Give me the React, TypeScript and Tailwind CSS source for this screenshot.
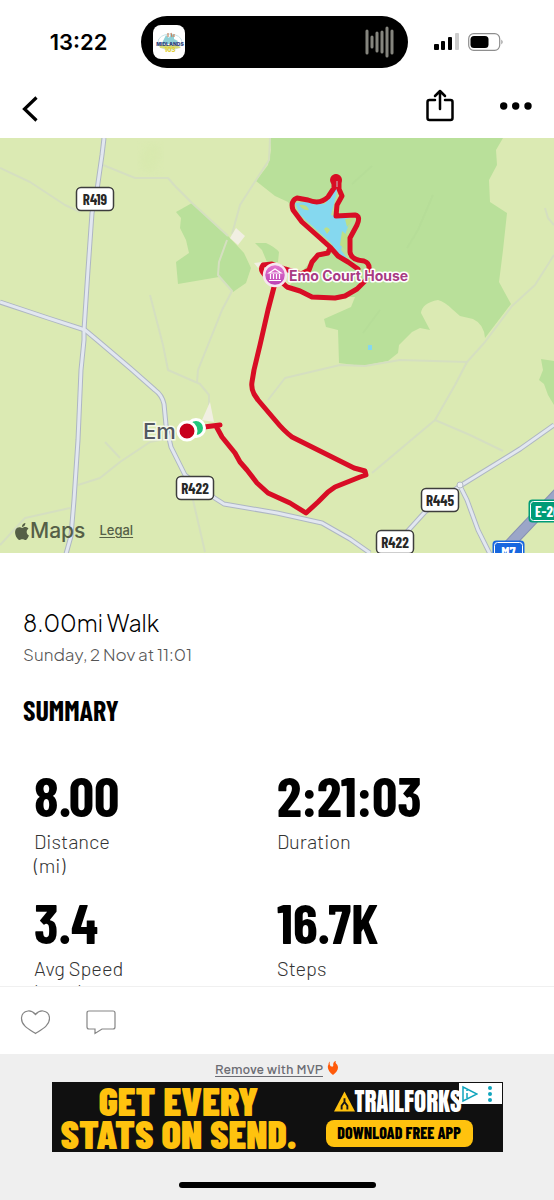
import React from 'react';

const condensed = "font-['Barlow_Condensed','Roboto_Condensed','Liberation_Sans_Narrow',sans-serif]";
const jakarta = "font-['Plus_Jakarta_Sans','DM_Sans','Inter',sans-serif]";
const barlow = "font-['Barlow','Roboto',sans-serif]";

const stats = [
  { value: '8.00', label: 'Distance (mi)' },
  { value: '2:21:03', label: 'Duration' },
  { value: '3.4', label: 'Avg Speed (mph)' },
  { value: '16.7K', label: 'Steps' },
];

function StatusBar() {
  return (
    <div className="grid grid-cols-[141fr_267fr_146fr] items-center pt-4">
      <div className="pl-4 text-center font-['Inter',sans-serif] text-[22px] font-semibold leading-none">13:22</div>
      <div className="flex h-[52px] items-center justify-between rounded-full bg-black px-3">
        <svg className="h-[34px] w-8" viewBox="0 0 32 34" role="img" aria-label="Midlands 103">
          <rect width="32" height="34" rx="8" fill="#fff" />
          <ellipse cx="17" cy="17" rx="12" ry="8" fill="none" stroke="#c8e4e8" />
          <path d="M10 16l3-6 3 3 2-4 3 1v4l4 2-2 3H9z" fill="#8fd0d6" />
          <path d="M15 8v4M18 8l1 4M21 9v3" stroke="#c68562" strokeWidth="1.2" />
          <path d="M6 20h18l4 3-9 1-12-1z" fill="#d6dc78" />
          <text x="17" y="21" textAnchor="middle" fontFamily="Inter, sans-serif" fontWeight="900" fontSize="5" fill="#33477f">MIDLANDS</text>
          <text x="17" y="27" textAnchor="middle" fontFamily="Inter, sans-serif" fontWeight="900" fontSize="6" fill="#dfcf38">103</text>
        </svg>
        <svg className="h-8 w-8" viewBox="0 0 32 32" stroke="#85857e" strokeWidth="3" strokeLinecap="round" aria-hidden="true">
          <path d="M3 5v22M8 11v10M13 7v18M18 6v20M23 2v28M28 5v22" />
        </svg>
      </div>
      <div className="flex items-center gap-2 pl-[26px]">
        <svg className="h-[18px] w-[26px]" viewBox="0 0 26 18" aria-hidden="true">
          <rect x="0" y="11" width="5" height="6" rx="1" />
          <rect x="7" y="8" width="4" height="9" rx="1" />
          <rect x="14" y="4" width="4" height="13" rx="1" />
          <rect x="21" y="0" width="4" height="17" rx="1" fill="#ccc" />
        </svg>
        <svg className="h-[18px] w-9" viewBox="0 0 36 18" aria-hidden="true">
          <rect x=".7" y=".7" width="31" height="16.600" rx="5" fill="none" stroke="#8e8e8e" strokeWidth="1.200" />
          <rect x="2.500" y="3" width="18" height="12" rx="3.500" />
          <path d="M33.500 6.500q2 2.500 0 5z" fill="#777" />
        </svg>
      </div>
    </div>
  );
}

function Toolbar() {
  return (
    <header className="flex h-[70px] items-center justify-between pr-[22px] pl-5">
      <button aria-label="Back" className="pt-3">
        <svg className="h-7 w-5" viewBox="0 0 20 28" fill="none" stroke="#000" strokeWidth="3.200" aria-hidden="true">
          <path d="M16.500 2.500L4.500 14l12 11.500" />
        </svg>
      </button>
      <div className="flex items-center gap-11 pt-1">
        <button aria-label="Share">
          <svg className="h-9 w-8" viewBox="0 0 32 36" fill="none" stroke="#000" strokeWidth="2.500" strokeLinecap="round" strokeLinejoin="round" aria-hidden="true">
            <path d="M11 13H5.500Q3.500 13 3.500 15v16q0 2 2 2h21q2 0 2-2V15q0-2-2-2H21M16 22V4M11 9l5-5 5 5" />
          </svg>
        </button>
        <button aria-label="More">
          <svg className="h-8 w-8" viewBox="0 0 32 32" aria-hidden="true">
            <circle cx="3.700" cy="17" r="3.700" /><circle cx="15.700" cy="17" r="3.700" /><circle cx="28" cy="17" r="3.700" />
          </svg>
        </button>
      </div>
    </header>
  );
}

const roads = [
  'M104 138L102 155 97 190 92 213 88 270 84 330V340L81 370 78 440 74 500 71 536 66 554',
  'M0 302L48 318 85 330 97 340 130 368 155 390Q162 395 164 404L166 425 171 447 185 475 213 497 224 504 277 513 322 523 350 539 370 553',
  'M405 534L425 512 460 486 520 449 554 425',
  'M460 486L467 500 478 530 490 554',
];

const paths = [
  'M0 168L30 182 65 205 80 212', 'M103 165L135 178H168L175 186 192 203 228 236',
  'M270 138L269 160 256 180 240 205 232 234', 'M227 240L219 262 218 275 232 291 222 310 212 335 198 370 197 382',
  'M150 295L163 345 168 370 200 384 209 395V405', 'M78 485L100 478 120 462 150 442 170 438', 'M105 442L120 458',
  'M0 545L25 518 70 508', 'M193 500L205 552', 'M268 400L285 378 340 365 365 366 400 360 467 362 485 342 512 306 535 285 554 255',
  'M467 362L455 385 435 420 410 441 372 473', 'M435 420L470 435 503 451', 'M545 208L548 218 554 225',
];

const track = [
  'M358 269L348 262 338 256 330 247 320 238 302 222 293 210Q290 201 297 198L308 200Q320 205 328 197L334 188V178Q337 175 339 180L339 189 342 196 337 205 336 216 355 215Q361 216 357 225L350 238V252Q351 260 364 261 370 263 369 270L366 280 357 289 345 296 335 298 312 297 300 291 287 287 275 276',
  'M329 250L328 253 318 255 312 262 309 270 301 274 285 269 272 264 263 265Q259 270 266 276',
  'M274 287L268 310 260 345 254 370 252 382Q251 388 254 394L258 400 275 420Q284 431 292 437L320 451 354 468 365 471 366 475 360 477 335 487 328 492 318 502 306 513 290 503 268 493 257 483 247 470 240 462 235 453 222 437 216 426M204 427L220 425',
];

function Shield({ x, y, text }: { x: number; y: number; text: string }) {
  return (
    <g>
      <rect x={x - 18.500} y={y - 11.500} width="37" height="23" rx="4.500" fill="#fff" stroke="#3d3d3d" strokeWidth="1.500" />
      <text x={x} y={y + 5.500} textAnchor="middle" fontSize="15" fontWeight="700" fill="#272727" className={condensed}>{text}</text>
    </g>
  );
}

function RouteMap() {
  return (
    <section aria-label="Route map" className="relative">
      <svg className="block w-full" viewBox="0 138 554 415">
        <defs>
          <linearGradient id="pin" x1="0" y1="0" x2="0" y2="1"><stop stopColor="#e77bd0" /><stop offset="1" stopColor="#b83eb3" /></linearGradient>
          <filter id="soft"><feGaussianBlur stdDeviation="4" /></filter>
        </defs>
        <rect y="138" width="554" height="415" fill="#dbeab3" />
        <path d="M147 145Q165 142 160 158T147 173Q132 166 147 145" fill="#d5e8aa" filter="url(#soft)" opacity=".5" />
        <g fill="#b9e09a">
          <path d="M270 138L271 150 268 165 256 181 275 196 288 202 302 222 330 247 312 260 290 285 315 297H355L351 307 324 319 326 327 338 330 339 363 362 366 388 361 398 353 399 345 412 332 420 328 430 330 421 313Q422 303 438 300 445 302 452 309L460 316 473 319Q484 324 485 338L511 304 499 282 503 250 507 213 490 202 489 180 497 165 496 150 503 138Z" />
          <path d="M176 212L192 203 228 236 244 253 251 268 246 283 233 292 219 277 178 284 176 262 189 253 186 240 180 228 181 218Z" />
          <path d="M255 243H266Q275 247 279 252L278 262 267 262 262 250ZM541 359L554 361V405L548 395 544 384 539 380 543 370Z" />
        </g>
        <path d="M433 195L418 230 407 248M372 166L352 184M380 310L363 333" fill="none" stroke="#afd896" strokeWidth="2" opacity=".3" />
        <g fill="none" stroke="#d5dfc0" strokeWidth="2" strokeLinejoin="round">
          {paths.map((d) => <path key={d} d={d} />)}
        </g>
        <path d="M236 228L245 236 238 245 230 238ZM254 263l8-1-4 6zM210 402L214 422 202 420Z" fill="#f1efe2" />
        <path d="M337 180L337 191 335 200 331 215 340 217 351 219 346 232 341 250 350 262 358 269 345 262 330 242 300 215 295 203 305 202 325 204 332 192ZM368 345h4v5h-4z" fill="#85d8ef" />
        <path d="M299 205q8-1 10 5-6 1-10-5M324 229q3-4 6 1l-3 4zM345 219l9-1-7 9zM342 231l6 5-2 14-6-5z" fill="#bddf87" />
        <g fill="none" strokeLinejoin="round">
          {roads.map((d) => <path key={d} d={d} stroke="#aeb6c3" strokeWidth="5" />)}
          {roads.map((d) => <path key={d} d={d} stroke="#e2e7f0" strokeWidth="3" />)}
          <path d="M558 493L505 549" stroke="#8791b2" strokeWidth="11" /><path d="M558 493L505 549" stroke="#9ba6c8" strokeWidth="9" />
        </g>
        <circle cx="460" cy="485" r="3" fill="#edf0f4" stroke="#b2b9c2" />
        <g fill="none" stroke="#d80d25" strokeWidth="5" strokeLinejoin="round" strokeLinecap="round">
          {track.map((d) => <path key={d} d={d} />)}
          <circle cx="336" cy="180" r="3.500" />
        </g>
        <path d="M337 181v6" stroke="#c88a94" strokeWidth="1.500" />
        <Shield x={95} y={199} text="R419" />
        <Shield x={195} y={488} text="R422" />
        <Shield x={440} y={500} text="R445" />
        <Shield x={395} y={542} text="R422" />
        <g className={condensed} fontWeight="700" fill="#fff">
          <rect x="528.500" y="499.500" width="48" height="23" rx="4" fill="#009b77" /><rect x="530.500" y="501.500" width="48" height="19" rx="3" fill="none" stroke="#fff" /><text x="535" y="516.500" fontSize="15">E-20</text>
          <rect x="492.500" y="540.500" width="32" height="24" rx="4" fill="#1767df" /><rect x="494.500" y="542.500" width="28" height="22" rx="3" fill="none" stroke="#fff" /><text x="508.500" y="558" textAnchor="middle" fontSize="15">M7</text>
        </g>
        <text x="289" y="281" fontFamily="Inter, sans-serif" fontSize="14" fontWeight="700" fill="#a83b83" stroke="#fff" strokeWidth="3" paintOrder="stroke" strokeLinejoin="round">Emo Court House</text>
        <circle cx="275" cy="275" r="11" fill="url(#pin)" stroke="#f7e6ef" strokeWidth="2.500" />
        <path d="M269 273l6-4 6 4zM270.500 274v5M273.500 274v5M276.500 274v5M279.500 274v5M269 280.500h12" fill="none" stroke="#fff" strokeWidth="1.200" />
        <text x="143" y="439" fontFamily="Inter, sans-serif" fontSize="22" fontWeight="500" fill="#535861" stroke="#f5f9e9" strokeWidth="3" paintOrder="stroke">Em</text>
        <circle cx="196" cy="428" r="8.500" fill="#22c67c" stroke="#fff" strokeWidth="3" />
        <circle cx="187" cy="431" r="9" fill="#c8001d" stroke="#fff" strokeWidth="3" />
      </svg>
      <div className="absolute bottom-2 left-[14px] flex items-center gap-[14px] font-['Inter',sans-serif] text-[#555f47]">
        <span className="flex items-center text-[21px] leading-7 font-medium">
          <svg className="h-[17px] w-4" viewBox="2 0 20 24" fill="currentColor" aria-hidden="true"><path d="M12.152 6.896c-.948 0-2.415-1.078-3.960-1.040-2.040.027-3.910 1.183-4.961 3.014-2.117 3.675-.546 9.103 1.519 12.090 1.013 1.454 2.208 3.090 3.792 3.039 1.520-.065 2.090-.987 3.935-.987 1.831 0 2.350.987 3.960.948 1.637-.026 2.676-1.480 3.676-2.948 1.156-1.688 1.636-3.325 1.662-3.415-.039-.013-3.182-1.221-3.220-4.857-.026-3.040 2.480-4.494 2.597-4.559-1.429-2.090-3.623-2.324-4.390-2.376-2-.156-3.675 1.090-4.610 1.090zM15.530 3.830c.843-1.012 1.400-2.427 1.245-3.830-1.207.052-2.662.805-3.532 1.818-.780.896-1.454 2.338-1.273 3.714 1.338.104 2.715-.688 3.559-1.701" /></svg>
          Maps
        </span>
        <a href="#legal" className="text-[13px] font-medium underline underline-offset-2">Legal</a>
      </div>
    </section>
  );
}

function Summary() {
  return (
    <section className="px-[23px] pt-[54px]">
      <h1 className={`${jakarta} text-[23px] leading-8 font-light`}>8.00mi Walk</h1>
      <p className={`${jakarta} text-[17px] leading-[30px] font-light text-[#555]`}>Sunday, 2 Nov at 11:01</p>
      <h2 className={`${condensed} pt-6 text-[28px] leading-[34px] font-bold`}>SUMMARY</h2>
      <dl className="mt-[33px] grid grid-cols-2 px-[11px]">
        {stats.map((s) => (
          <div key={s.label} className="flex h-[127px] flex-col-reverse justify-end">
            <dt className={`${barlow} w-24 text-[20px] leading-6 font-light text-[#333]`}>{s.label}</dt>
            <dd className={`${condensed} text-[56px] leading-[69px] font-bold`}>{s.value}</dd>
          </div>
        ))}
      </dl>
    </section>
  );
}

function Advert() {
  return (
    <aside aria-label="Advertisement" className="flex flex-col items-center bg-[#efefef] pt-[3px] pb-3">
      <div className="flex h-[25px] items-start gap-1">
        <a href="#mvp" className={`${barlow} text-[14px] leading-6 font-medium text-[#6b6c73] underline underline-offset-2`}>Remove with MVP</a>
        <svg className="mt-1 h-[14px] w-3" viewBox="0 0 12 14" fill="#ff5a0a" aria-hidden="true"><path d="M3 .5C2 3 3 5 4.500 5.500 6 6 6.500 5 6.200 4 6 1.500 7.500 0 9 0 8 1.500 9 2.500 10 3.500 12.500 7 10 11 6 14 2 11-.5 6.500 1.500 3.500 1.500 2 2 1 3 .5" /></svg>
      </div>
      <div className={`${condensed} relative flex h-[70px] w-[451px] max-w-full items-center bg-[#101010] font-bold`}>
        <div className="flex flex-1 flex-col items-center pr-5 text-[40px] font-black text-[#ffc20e]">
          <span className="leading-[33px] whitespace-nowrap">GET EVERY</span>
          <span className="leading-[33px] whitespace-nowrap">STATS ON SEND.</span>
        </div>
        <div className="flex w-[177px] shrink-0 flex-col gap-1">
          <div className="flex items-center pl-2 font-['Anton','Oswald','Barlow_Condensed',sans-serif] text-[25px] leading-7 font-normal text-white">
            <svg className="h-[21px] w-[21px] shrink-0" viewBox="0 0 22 21" aria-hidden="true"><path d="M11 0L22 21H0Z" fill="#ffc20e" /><path d="M8 19v-4l3-4V7M14 19v-4l-3-4" fill="none" stroke="#171717" strokeWidth="2" /></svg>
            TRAILFORKS
          </div>
          <button className="h-[27px] w-[147px] rounded-lg bg-[#ffc20e] text-[16px] leading-none font-extrabold text-black">DOWNLOAD FREE APP</button>
        </div>
        <div className="absolute top-px right-px flex h-[21px] w-[43px] items-center justify-between bg-white px-[2px]">
          <svg className="h-[18px] w-[17px]" viewBox="0 0 17 18" fill="none" stroke="#11a5bd" strokeWidth="1.500" aria-hidden="true"><path d="M2 2L16 9 2 16ZM6 8v5M6 5v1" /></svg>
          <svg className="mr-1 h-[18px] w-3" viewBox="0 0 12 18" fill="#11a5bd" aria-hidden="true"><circle cx="6" cy="3" r="2" /><circle cx="6" cy="9" r="2" /><circle cx="6" cy="15" r="2" /></svg>
        </div>
      </div>
      <div className="mt-[30px] h-[6px] w-[197px] rounded-full bg-black" />
    </aside>
  );
}

export default function App() {
  return (
    <div className="flex h-dvh flex-col overflow-hidden bg-white text-black">
      <StatusBar />
      <Toolbar />
      <main className="min-h-0 flex-1 overflow-hidden">
        <RouteMap />
        <Summary />
      </main>
      <footer>
        <div className="flex h-[68px] items-center gap-9 border-t border-[#f0f0f0] px-5 pt-1">
          <button aria-label="Like">
            <svg className="h-7 w-[30px]" viewBox="0 0 30 28" fill="none" stroke="#858585" strokeWidth="1.200" aria-hidden="true"><path d="M15.500 5.500Q12 1.500 8 2 1.500 3 1.500 9.500c0 7 7 10.500 14 15 7-4.500 14-8 14-15Q29.500 3 23 2q-4-.5-7.500 3.500Z" /></svg>
          </button>
          <button aria-label="Comment">
            <svg className="h-7 w-[30px]" viewBox="0 0 30 28" fill="none" stroke="#858585" strokeWidth="1.200" aria-hidden="true"><path d="M3 2h24q2 0 2 2v14q0 2-2 2H16l-7 4.500V20H3q-2 0-2-2V4q0-2 2-2Z" /></svg>
          </button>
        </div>
        <Advert />
      </footer>
    </div>
  );
}
